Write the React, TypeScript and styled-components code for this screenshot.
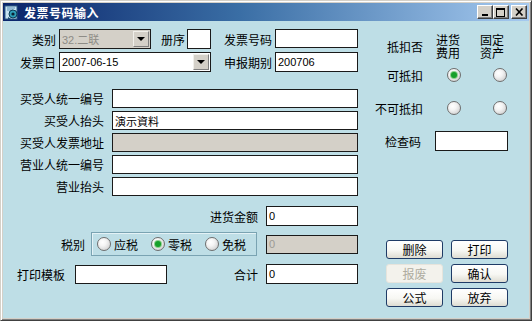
import React from "react";
import styled, { createGlobalStyle, css } from "styled-components";

const Global = createGlobalStyle`
  html, body { margin: 0; padding: 0; background: #ffffff; }
  body { font-family: "Liberation Sans", "Noto Sans CJK SC", sans-serif; font-size: 12px; color: #000; }
  * { box-sizing: border-box; }
`;

const Window = styled.div`
  width: 532px;
  height: 321px;
  display: flex;
  flex-direction: column;
  background: #d4d0c8;
  border: 1px solid;
  border-color: #d4d0c8 #404040 #404040 #d4d0c8;
  box-shadow: inset 1px 1px #ffffff, inset -1px -1px #808080;
  padding: 2px;
`;

const TitleBar = styled.div`
  height: 18px;
  flex: none;
  display: flex;
  align-items: center;
  background: linear-gradient(90deg, #0a246a 0%, #3a6ea5 45%, #a6caf0 100%);
  padding-right: 2px;
`;

const TitleText = styled.span`
  margin-left: 4px;
  color: #ffffff;
  font-weight: bold;
  font-size: 12px;
  letter-spacing: 0.5px;
  font-family: "Noto Sans CJK SC", sans-serif;
`;

const CaptionGroup = styled.div`
  margin-left: auto;
  display: flex;
  align-items: center;
`;

const CaptionButton = styled.div<{ $gap?: boolean }>`
  width: 16px;
  height: 14px;
  margin-left: ${(p) => (p.$gap ? "2px" : "0")};
  background: #d4d0c8;
  border: 1px solid;
  border-color: #ffffff #404040 #404040 #ffffff;
  box-shadow: inset -1px -1px #808080;
  display: flex;
  align-items: center;
  justify-content: center;
`;

const Body = styled.div`
  flex: 1;
  display: flex;
  background: #bedee6;
`;

const LeftCol = styled.div`
  width: 355px;
  flex: none;
  padding-top: 8px;
  display: flex;
  flex-direction: column;
`;

const RightCol = styled.div`
  flex: 1;
  padding-top: 12px;
  display: flex;
  flex-direction: column;
`;

const TopGrid = styled.div`
  display: grid;
  grid-template-columns: 53px 152px 58px 83px;
  grid-auto-rows: 20px;
  column-gap: 3px;
  row-gap: 3px;
`;

const FieldGrid = styled.div`
  margin-top: 17px;
  display: grid;
  grid-template-columns: 105px 246px;
  grid-auto-rows: 19px;
  column-gap: 4px;
  row-gap: 3px;
`;

const Label = styled.span<{ $pad?: number; $w?: number }>`
  display: flex;
  align-items: center;
  justify-content: flex-end;
  white-space: nowrap;
  font-size: 12px;
  font-family: "Noto Sans CJK SC", sans-serif;
  padding-right: ${(p) => p.$pad ?? 0}px;
  ${(p) => p.$w !== undefined && css`width: ${p.$w}px; flex: none;`}
`;

const TextBox = styled.div<{ $gray?: boolean; $muted?: boolean; $w?: number; $h?: number; $ml?: number }>`
  height: ${(p) => (p.$h ? `${p.$h}px` : "100%")};
  ${(p) => p.$w !== undefined && css`width: ${p.$w}px; flex: none;`}
  margin-left: ${(p) => p.$ml ?? 0}px;
  border: 1px solid #1a1a1a;
  background: ${(p) => (p.$gray ? "#d4d0c8" : "#ffffff")};
  color: ${(p) => (p.$muted ? "#9c9a94" : "#000000")};
  font-size: 11px;
  padding-left: 2px;
  display: flex;
  align-items: center;
  white-space: nowrap;
  overflow: hidden;
`;

const Combo = styled.div<{ $w: number; $disabled?: boolean }>`
  width: ${(p) => p.$w}px;
  flex: none;
  height: 20px;
  border: 1px solid #1a1a1a;
  background: ${(p) => (p.$disabled ? "#d4d0c8" : "#ffffff")};
  color: ${(p) => (p.$disabled ? "#8e8c86" : "#000000")};
  display: flex;
  font-size: 11px;
`;

const ComboText = styled.span`
  flex: 1;
  display: flex;
  align-items: center;
  padding-left: 2px;
  white-space: nowrap;
  font-family: "Liberation Sans", "Noto Sans CJK SC", sans-serif;
`;

const DropButton = styled.span`
  width: 16px;
  flex: none;
  margin: 1px;
  background: #d4d0c8;
  border: 1px solid;
  border-color: #f0efea #808080 #808080 #f0efea;
  display: flex;
  align-items: center;
  justify-content: center;
  &::after {
    content: "";
    border-left: 4px solid transparent;
    border-right: 4px solid transparent;
    border-top: 4px solid #000;
  }
`;

const Inline = styled.div`
  display: flex;
  align-items: stretch;
`;

const Bottom = styled.div`
  margin-top: 10px;
  display: flex;
  flex-direction: column;
`;

const BottomRow = styled.div<{ $mt?: number; $h: number }>`
  margin-top: ${(p) => p.$mt ?? 0}px;
  height: ${(p) => p.$h}px;
  display: grid;
  grid-template-columns: 255px 92px;
  column-gap: 8px;
  align-items: center;
`;

const RowLeft = styled.div<{ $pl?: number }>`
  display: flex;
  align-items: center;
  height: 100%;
  padding-left: ${(p) => p.$pl ?? 0}px;
`;

const Spacer = styled.span`
  flex: 1;
`;

const GroupBox = styled.div`
  margin-left: 6px;
  width: 166px;
  height: 24px;
  border: 1px solid #7aa3b2;
  box-shadow: inset 1px 1px #e4f2f6;
  display: flex;
  align-items: center;
  padding-left: 5px;
  gap: 13px;
`;

const RadioItem = styled.span`
  display: flex;
  align-items: center;
  gap: 3px;
  font-size: 12px;
  font-family: "Noto Sans CJK SC", sans-serif;
`;

const RadioDot = styled.span<{ $checked?: boolean }>`
  width: 14px;
  height: 14px;
  flex: none;
  border-radius: 50%;
  border: 1px solid #6e6e6e;
  background: radial-gradient(circle at 38% 35%, #ffffff 0%, #f4f4f4 35%, #c4c4c4 100%);
  display: inline-flex;
  align-items: center;
  justify-content: center;
  &::after {
    content: "";
    display: ${(p) => (p.$checked ? "block" : "none")};
    width: 6px;
    height: 6px;
    border-radius: 50%;
    background: #17a02a;
    box-shadow: 0 0 0 1px #8ccf8c;
  }
`;

const HeadRow = styled.div`
  height: 26px;
  display: flex;
  align-items: center;
`;

const HeadStack = styled.span<{ $ml: number }>`
  margin-left: ${(p) => p.$ml}px;
  width: 26px;
  display: block;
  font-size: 12px;
  line-height: 13px;
  font-family: "Noto Sans CJK SC", sans-serif;
`;

const ChoiceRow = styled.div<{ $mt: number }>`
  margin-top: ${(p) => p.$mt}px;
  height: 18px;
  display: flex;
  align-items: center;
`;

const RadioSlot = styled.span<{ $ml: number }>`
  margin-left: ${(p) => p.$ml}px;
  display: flex;
`;

const CheckRow = styled.div`
  margin-top: 14px;
  height: 20px;
  display: flex;
  align-items: stretch;
`;

const ButtonGrid = styled.div`
  margin-top: 89px;
  margin-left: 28px;
  display: grid;
  grid-template-columns: 57px 57px;
  grid-auto-rows: 19px;
  column-gap: 8px;
  row-gap: 5px;
`;

const Btn = styled.div<{ $disabled?: boolean }>`
  display: flex;
  align-items: center;
  justify-content: center;
  border: 1px solid #1f3b66;
  border-radius: 3px;
  background: linear-gradient(#ffffff 0%, #f7f7f3 55%, #dedcd2 100%);
  font-size: 12px;
  font-family: "Noto Sans CJK SC", sans-serif;
  color: #000;
  ${(p) =>
    p.$disabled &&
    css`
      border-color: #e6e4dc;
      background: #f3f2ec;
      color: #aeaca0;
    `}
`;

const AppIcon = () => (
  <svg width="16" height="16" viewBox="0 0 16 16" style={{ flex: "none", marginLeft: 1 }}>
    <rect x="1" y="2" width="12" height="13" fill="#c9e4f2" stroke="#2f5d86" strokeWidth="1" />
    <path d="M3 4 L11 4 M3 6 L9 6" stroke="#5a8db5" strokeWidth="1" />
    <circle cx="9" cy="10" r="4" fill="#2f9fb8" stroke="#0d3b55" strokeWidth="1" />
    <circle cx="9" cy="10" r="1.6" fill="#0b2233" />
    <path d="M4 13 L7 15 L4 15 Z" fill="#1b4a70" />
  </svg>
);

const MinGlyph = () => (
  <svg width="8" height="8" viewBox="0 0 8 8">
    <rect x="1" y="6" width="6" height="2" fill="#000" />
  </svg>
);

const MaxGlyph = () => (
  <svg width="10" height="9" viewBox="0 0 10 9">
    <rect x="0.5" y="0.5" width="8" height="8" fill="none" stroke="#000" />
    <rect x="0" y="0" width="9" height="2" fill="#000" />
  </svg>
);

const CloseGlyph = () => (
  <svg width="9" height="8" viewBox="0 0 9 8">
    <path d="M1 0.5 L7.5 7.5 M7.5 0.5 L1 7.5" stroke="#000" strokeWidth="1.6" />
  </svg>
);

export default function App() {
  return (
    <>
      <Global />
      <Window>
        <TitleBar>
          <AppIcon />
          <TitleText>发票号码输入</TitleText>
          <CaptionGroup>
            <CaptionButton>
              <MinGlyph />
            </CaptionButton>
            <CaptionButton>
              <MaxGlyph />
            </CaptionButton>
            <CaptionButton $gap>
              <CloseGlyph />
            </CaptionButton>
          </CaptionGroup>
        </TitleBar>
        <Body>
          <LeftCol>
            <TopGrid>
              <Label>类别</Label>
              <Inline>
                <Combo $w={92} $disabled>
                  <ComboText>32.二联</ComboText>
                  <DropButton />
                </Combo>
                <Label $w={34}>册序</Label>
                <TextBox $w={24} $ml={2} />
              </Inline>
              <Label>发票号码</Label>
              <TextBox $h={19} />

              <Label>发票日</Label>
              <Combo $w={152}>
                <ComboText>2007-06-15</ComboText>
                <DropButton />
              </Combo>
              <Label>申报期别</Label>
              <TextBox>200706</TextBox>
            </TopGrid>

            <FieldGrid>
              <Label $pad={4}>买受人统一编号</Label>
              <TextBox />
              <Label $pad={4}>买受人抬头</Label>
              <TextBox>演示資料</TextBox>
              <Label $pad={4}>买受人发票地址</Label>
              <TextBox $gray />
              <Label $pad={4}>营业人统一编号</Label>
              <TextBox />
              <Label $pad={4}>营业抬头</Label>
              <TextBox />
            </FieldGrid>

            <Bottom>
              <BottomRow $h={20}>
                <RowLeft>
                  <Spacer />
                  <Label>进货金额</Label>
                </RowLeft>
                <TextBox $h={20}>0</TextBox>
              </BottomRow>
              <BottomRow $mt={6} $h={24}>
                <RowLeft>
                  <Label $w={82}>税别</Label>
                  <GroupBox>
                    <RadioItem>
                      <RadioDot />
                      应税
                    </RadioItem>
                    <RadioItem>
                      <RadioDot $checked />
                      零税
                    </RadioItem>
                    <RadioItem>
                      <RadioDot />
                      免税
                    </RadioItem>
                  </GroupBox>
                </RowLeft>
                <TextBox $h={19} $gray $muted>
                  0
                </TextBox>
              </BottomRow>
              <BottomRow $mt={8} $h={20}>
                <RowLeft $pl={14}>
                  <Label>打印模板</Label>
                  <TextBox $w={92} $h={19} $ml={10} />
                  <Spacer />
                  <Label>合计</Label>
                </RowLeft>
                <TextBox $h={20}>0</TextBox>
              </BottomRow>
            </Bottom>
          </LeftCol>

          <RightCol>
            <HeadRow>
              <Label $w={65}>抵扣否</Label>
              <HeadStack $ml={13}>
                进货
                <br />
                费用
              </HeadStack>
              <HeadStack $ml={18}>
                固定
                <br />
                资产
              </HeadStack>
            </HeadRow>
            <ChoiceRow $mt={7}>
              <Label $w={65}>可抵扣</Label>
              <RadioSlot $ml={24}>
                <RadioDot $checked />
              </RadioSlot>
              <RadioSlot $ml={32}>
                <RadioDot />
              </RadioSlot>
            </ChoiceRow>
            <ChoiceRow $mt={15}>
              <Label $w={65}>不可抵扣</Label>
              <RadioSlot $ml={24}>
                <RadioDot />
              </RadioSlot>
              <RadioSlot $ml={32}>
                <RadioDot />
              </RadioSlot>
            </ChoiceRow>
            <CheckRow>
              <Label $w={65} $pad={2}>
                检查码
              </Label>
              <TextBox $w={73} $ml={12} />
            </CheckRow>
            <ButtonGrid>
              <Btn>删除</Btn>
              <Btn>打印</Btn>
              <Btn $disabled>报废</Btn>
              <Btn>确认</Btn>
              <Btn>公式</Btn>
              <Btn>放弃</Btn>
            </ButtonGrid>
          </RightCol>
        </Body>
      </Window>
    </>
  );
}
